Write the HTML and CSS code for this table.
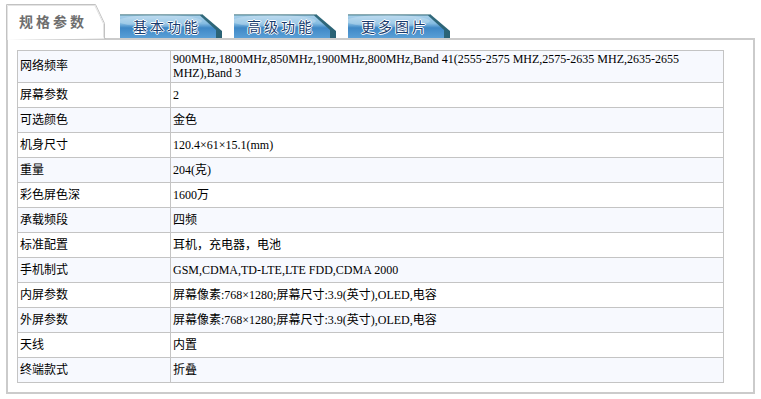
FILE: index.html
```html
<!DOCTYPE html>
<html lang="zh">
<head>
<meta charset="utf-8">
<title>规格参数</title>
<link rel="stylesheet" href="styles.css">
</head>
<body>
<div class="page">
  <div class="tabs">
    <div class="tab tab-active">
      <svg class="tab-bg" width="100" height="36" viewBox="0 0 100 36">
        <path d="M0.5 36 V0.5 H89.5 L98.5 19.5 V34.5 H100" fill="#ffffff" stroke="#c2c2c2" stroke-width="1"/>
        <path d="M1.5 36 V1.5 H88.8 L97.5 19.8 V33.5" fill="none" stroke="#e4e4e4" stroke-width="1"/>
      </svg>
      <span class="tab-label">规格参数</span>
    </div>
    <div class="tab tab-blue">
      <svg class="tab-bg" width="102" height="24" viewBox="0 0 102 24">
        <defs>
          <linearGradient id="blue1" x1="0" y1="0" x2="0" y2="1">
            <stop offset="0" stop-color="#a9d0ea"/>
            <stop offset="0.35" stop-color="#86bde2"/>
            <stop offset="0.55" stop-color="#3f88c6"/>
            <stop offset="1" stop-color="#5a9fd6"/>
          </linearGradient>
          <linearGradient id="teal1" x1="0" y1="0" x2="1" y2="0">
            <stop offset="0" stop-color="#4f8a98"/>
            <stop offset="1" stop-color="#2a6275"/>
          </linearGradient>
        </defs>
        <polygon points="0,0 82,0 102,17 102,24 0,24" fill="url(#teal1)"/>
        <polygon points="0,1.5 80,1.5 96,16 96,24 0,24" fill="url(#blue1)"/>
        <ellipse cx="40" cy="7" rx="42" ry="6" fill="#ffffff" opacity="0.22"/>
        <line x1="0" y1="0.5" x2="82" y2="0.5" stroke="#8aa9b0" stroke-width="1"/>
      </svg>
      <span class="tab-label">基本功能</span>
    </div>
    <div class="tab tab-blue">
      <svg class="tab-bg" width="102" height="24" viewBox="0 0 102 24">
        <polygon points="0,0 82,0 102,17 102,24 0,24" fill="url(#teal1)"/>
        <polygon points="0,1.5 80,1.5 96,16 96,24 0,24" fill="url(#blue1)"/>
        <ellipse cx="40" cy="7" rx="42" ry="6" fill="#ffffff" opacity="0.22"/>
        <line x1="0" y1="0.5" x2="82" y2="0.5" stroke="#8aa9b0" stroke-width="1"/>
      </svg>
      <span class="tab-label">高级功能</span>
    </div>
    <div class="tab tab-blue">
      <svg class="tab-bg" width="102" height="24" viewBox="0 0 102 24">
        <polygon points="0,0 82,0 102,17 102,24 0,24" fill="url(#teal1)"/>
        <polygon points="0,1.5 80,1.5 96,16 96,24 0,24" fill="url(#blue1)"/>
        <ellipse cx="40" cy="7" rx="42" ry="6" fill="#ffffff" opacity="0.22"/>
        <line x1="0" y1="0.5" x2="82" y2="0.5" stroke="#8aa9b0" stroke-width="1"/>
      </svg>
      <span class="tab-label">更多图片</span>
    </div>
  </div>
  <div class="panel">
    <table class="spec">
      <colgroup><col class="col-name"><col></colgroup>
      <tbody>
        <tr class="odd"><td>网络频率</td><td>900MHz,1800MHz,850MHz,1900MHz,800MHz,Band 41(2555-2575 MHZ,2575-2635 MHZ,2635-2655<br>MHZ),Band 3</td></tr>
        <tr><td>屏幕参数</td><td>2</td></tr>
        <tr class="odd"><td>可选颜色</td><td>金色</td></tr>
        <tr><td>机身尺寸</td><td>120.4×61×15.1(mm)</td></tr>
        <tr class="odd"><td>重量</td><td>204(克)</td></tr>
        <tr><td>彩色屏色深</td><td>1600万</td></tr>
        <tr class="odd"><td>承载频段</td><td>四频</td></tr>
        <tr><td>标准配置</td><td>耳机，充电器，电池</td></tr>
        <tr class="odd"><td>手机制式</td><td>GSM,CDMA,TD-LTE,LTE FDD,CDMA 2000</td></tr>
        <tr><td>内屏参数</td><td>屏幕像素:768×1280;屏幕尺寸:3.9(英寸),OLED,电容</td></tr>
        <tr class="odd"><td>外屏参数</td><td>屏幕像素:768×1280;屏幕尺寸:3.9(英寸),OLED,电容</td></tr>
        <tr><td>天线</td><td>内置</td></tr>
        <tr class="odd"><td>终端款式</td><td>折叠</td></tr>
      </tbody>
    </table>
  </div>
</div>
</body>
</html>
```

FILE: styles.css
```css
html, body {
  margin: 0;
  background: #ffffff;
}

body {
  font-family: "Liberation Serif", "Noto Sans CJK SC", serif;
  font-size: 12px;
  color: #000000;
}

.page {
  width: 749px;
  padding: 4px 0 0 6px;
}

.tabs {
  display: flex;
  align-items: flex-end;
  height: 34px;
  position: relative;
  z-index: 1;
}

.tab {
  position: relative;
  flex: none;
}

.tab-bg {
  position: absolute;
  left: 0;
  top: 0;
  display: block;
}

.tab-label {
  position: relative;
  display: block;
  font-family: "Noto Sans CJK SC", sans-serif;
  font-size: 14px;
  letter-spacing: 3px;
  white-space: nowrap;
}

.tab-active {
  width: 100px;
  height: 36px;
  margin-bottom: -2px;
}

.tab-active .tab-label {
  padding: 8px 0 0 13px;
  line-height: 18px;
  color: #6e6e6e;
  font-weight: 700;
}

.tab-blue {
  width: 102px;
  height: 24px;
  margin-left: 12px;
}

.tab-active + .tab-blue {
  margin-left: 14px;
}

.tab-blue .tab-label {
  padding-left: 13px;
  line-height: 24px;
  color: #173b6e;
  text-shadow: 1px 0 0 #ffffff, -1px 0 0 #ffffff, 0 1px 0 #ffffff, 0 -1px 0 #ffffff;
}

.panel {
  box-sizing: border-box;
  width: 749px;
  height: 356px;
  border: 2px solid #cbcbcb;
  padding: 10px 29px 10px 9px;
}

.spec {
  width: 707px;
  border-collapse: collapse;
  table-layout: fixed;
}

.col-name {
  width: 153px;
}

.spec td {
  border: 1px solid #c4c4c4;
  height: 25px;
  box-sizing: border-box;
  padding: 1px 2px 2px;
  line-height: 14px;
  vertical-align: middle;
}

.spec tr.odd td {
  background: #f7f9fe;
}
```
